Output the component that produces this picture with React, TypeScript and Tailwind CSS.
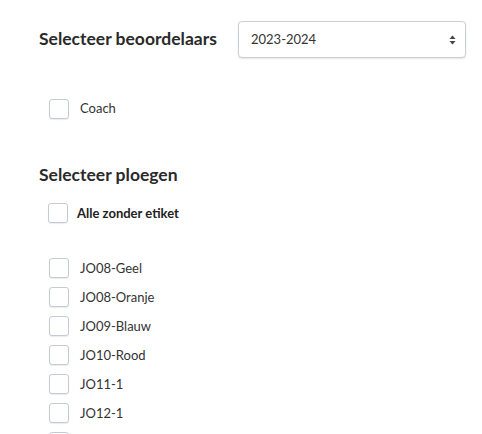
import React from 'react'

const teams = ['JO08-Geel', 'JO08-Oranje', 'JO09-Blauw', 'JO10-Rood', 'JO11-1', 'JO12-1']

function Box() {
  return (
    <span className="w-[20px] h-[20px] shrink-0 rounded-[3px] border border-[#c5cbd6] bg-white shadow-[0_1px_1px_rgba(0,0,0,0.08)]" />
  )
}

export default function App() {
  return (
    <div className="h-[434px] overflow-hidden bg-white pl-[39px] text-[#222] font-['Lato','Liberation_Sans',sans-serif]">
      {/* Beoordelaars */}
      <div className="flex items-center pt-[21px]">
        <h2 className="w-[199px] text-[17.5px] font-bold text-[#2a2a2a]">Selecteer beoordelaars</h2>
        <div className="flex h-[37px] w-[228px] items-center justify-between rounded-[4px] border border-[#c9ced8] bg-white pl-[12px] pr-[9px] shadow-[0_1px_2px_rgba(0,0,0,0.1)]">
          <span className="text-[13px] text-[#333]">2023-2024</span>
          <svg width="7" height="10" viewBox="0 0 7 10" fill="#444">
            <path d="M3.5 0.5 L6.5 4 H0.5 Z" />
            <path d="M3.5 9.5 L6.5 6 H0.5 Z" />
          </svg>
        </div>
      </div>

      <label className="mt-[41px] ml-[10px] flex items-center gap-[11px]">
        <Box />
        <span className="text-[13px] text-[#333]">Coach</span>
      </label>

      {/* Ploegen */}
      <h2 className="mt-[43px] text-[17.5px] font-bold text-[#2a2a2a]">Selecteer ploegen</h2>

      <label className="mt-[15px] ml-[9px] flex items-center gap-[9px]">
        <Box />
        <span className="text-[13px] font-bold text-[#222]">Alle zonder etiket</span>
      </label>

      <div className="mt-[35px] ml-[10px] flex flex-col gap-[9px]">
        {teams.map((t) => (
          <label key={t} className="flex items-center gap-[11px]">
            <Box />
            <span className="text-[13px] text-[#333]">{t}</span>
          </label>
        ))}
        {/* next row, cut off by the window */}
        <Box />
      </div>
    </div>
  )
}
